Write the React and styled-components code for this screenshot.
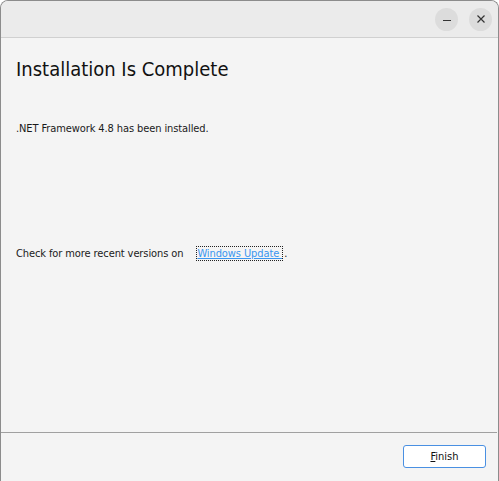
import React from "react";
import styled, { createGlobalStyle } from "styled-components";

const GlobalStyle = createGlobalStyle`
    html, body {
        margin: 0;
        padding: 0;
        background: #ffffff;
    }
    body {
        font-family: "DejaVu Sans Condensed", "DejaVu Sans", "Liberation Sans", sans-serif;
        font-stretch: condensed;
    }
`;

const Window = styled.div`
    width: 499px;
    height: 481px;
    box-sizing: border-box;
    display: flex;
    flex-direction: column;
    background: #f4f4f4;
    border: 1px solid #8c8c8c;
    border-bottom: none;
    border-radius: 8px 8px 0 0;
    overflow: hidden;
`;

const TitleBar = styled.div`
    height: 36px;
    flex-shrink: 0;
    display: flex;
    align-items: center;
    justify-content: flex-end;
    gap: 11px;
    padding-right: 6px;
    background: #ebebeb;
    border-bottom: 1px solid #d0d0d0;
`;

const CaptionButton = styled.button`
    width: 23px;
    height: 23px;
    padding: 0;
    border: none;
    border-radius: 50%;
    background: #dcdcdc;
    display: flex;
    align-items: center;
    justify-content: center;
    cursor: pointer;
`;

const Body = styled.div`
    flex: 1;
    display: flex;
    flex-direction: column;
    padding: 16px 15px 0;
`;

const Heading = styled.h1`
    margin: 0;
    font-size: 20px;
    font-weight: normal;
    color: #111;
    line-height: 30px;
`;

const Text = styled.p`
    margin: ${(p) => p.top}px 0 0;
    font-size: 11px;
    line-height: 14px;
    letter-spacing: -0.1px;
    color: #1a1a1a;
    white-space: pre;
`;

const Link = styled.a`
    margin-left: 14px;
    color: #3a96f0;
    text-decoration: underline;
    outline: 1px dotted #222;
    outline-offset: 0;
`;

const Period = styled.span`
    margin-left: 2px;
`;

const Footer = styled.div`
    height: 49px;
    flex-shrink: 0;
    display: flex;
    align-items: flex-start;
    justify-content: flex-end;
    padding: 12px 11px 0 0;
    box-sizing: border-box;
    border-top: 1px solid #a0a0a0;
    margin-right: 1px;
`;

const FinishButton = styled.button`
    width: 83px;
    height: 23px;
    box-sizing: border-box;
    background: #ffffff;
    border: 1px solid #4a90e2;
    border-radius: 3px;
    font-family: "DejaVu Sans Condensed", "DejaVu Sans", "Liberation Sans", sans-serif;
    font-stretch: condensed;
    font-size: 11px;
    color: #111;
    cursor: pointer;

    u {
        text-decoration: underline;
    }
`;

export default function App() {
    return (
        <>
            <GlobalStyle />
            <Window>
                <TitleBar>
                    <CaptionButton aria-label="Minimize">
                        <svg width="10" height="10" viewBox="0 0 10 10">
                            <path d="M1 6.5 H9" stroke="#333" strokeWidth="1" />
                        </svg>
                    </CaptionButton>
                    <CaptionButton aria-label="Close">
                        <svg width="10" height="10" viewBox="0 0 10 10">
                            <path d="M1.5 1.5 L8.5 8.5 M8.5 1.5 L1.5 8.5" stroke="#333" strokeWidth="1.2" />
                        </svg>
                    </CaptionButton>
                </TitleBar>
                <Body>
                    <Heading>Installation Is Complete</Heading>
                    <Text top={38}>.NET Framework 4.8 has been installed.</Text>
                    <Text top={111}>
                        Check for more recent versions on<Link href="#">Windows Update </Link>
                        <Period>.</Period>
                    </Text>
                </Body>
                <Footer>
                    <FinishButton>
                        <u>F</u>inish
                    </FinishButton>
                </Footer>
            </Window>
        </>
    );
}
